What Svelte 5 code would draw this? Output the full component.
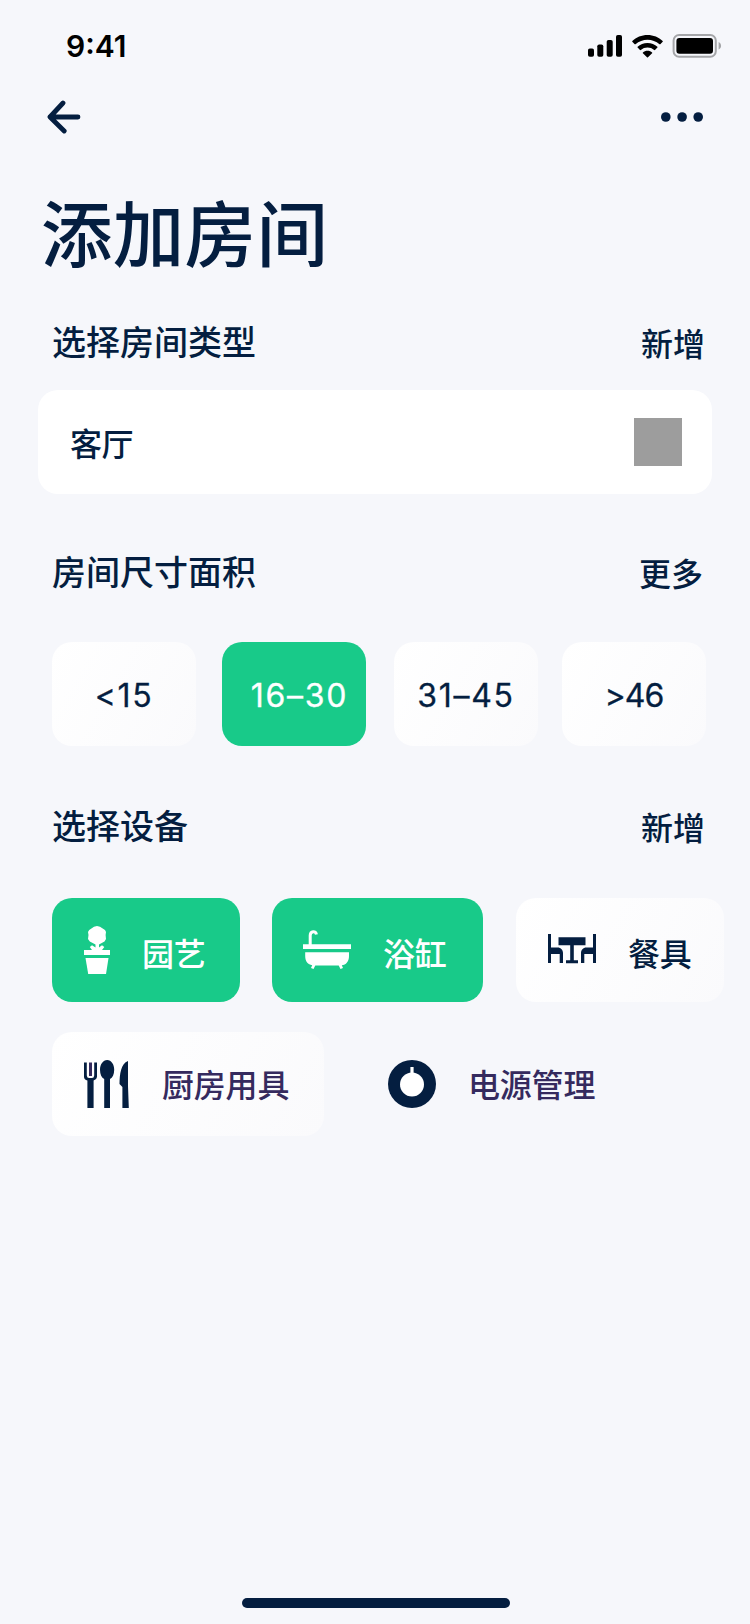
<script lang="ts">
  interface Device {
    id: string;
    label: string;
    selected?: boolean;
    plain?: boolean;
  }

  const sizes = [
    { id: 's', label: '<15' },
    { id: 'm', label: '16–30' },
    { id: 'l', label: '31–45' },
    { id: 'xl', label: '>46' },
  ];

  const deviceRows: Device[][] = [
    [
      { id: 'garden', label: '园艺', selected: true },
      { id: 'bath', label: '浴缸', selected: true },
      { id: 'dining', label: '餐具' },
    ],
    [
      { id: 'kitchen', label: '厨房用具' },
      { id: 'power', label: '电源管理', plain: true },
    ],
  ];

  let selectedSize = $state('m');
  let selectedDevices = $state(deviceRows.flat().filter((d) => d.selected).map((d) => d.id));

  function toggleDevice(id: string) {
    selectedDevices = selectedDevices.includes(id)
      ? selectedDevices.filter((d) => d !== id)
      : [...selectedDevices, id];
  }
</script>

{#snippet deviceIcon(id: string)}
  {#if id === 'garden'}
    <svg width="26" height="48" viewBox="0 0 26 48" fill="currentColor" aria-hidden="true">
      <path d="M13 0 L16 .8 L21 4 L22 6 L21.6 9 L22 13 L20.5 15.5 L15 18.6 V21.5 L18 19.3 L20.3 21 L18 24 H26 V29 H0 V24 H8 L5.8 21 L8 19.3 L11.5 21.5 V18.6 L5.8 15.5 L4 13 L4.5 9 L4 6 L5.2 4 L10 .8 Z" />
      <path d="M1.5 32 H24.5 L22 48 H4.2 Z" />
    </svg>
  {:else if id === 'bath'}
    <svg width="48" height="48" viewBox="0 0 48 48" fill="currentColor" aria-hidden="true">
      <path d="M7.2 19 V9.5 C7.2 4.7 13 4.4 13.4 8.5" fill="none" stroke="currentColor" stroke-width="3" />
      <path d="M0 18.2 H48 V23 H0 Z M2.2 26.2 H46 V30 C46 35.5 43 39 38.8 39.2 L40 42 L37.5 43 L35.7 39.5 H12.3 L10.5 43 L8 42 L9.2 39.2 C5 38.5 2.2 35.5 2.2 30 Z" />
    </svg>
  {:else if id === 'dining'}
    <svg width="48" height="48" viewBox="0 0 48 48" fill="currentColor" aria-hidden="true">
      <path d="M0 8 H3 V21.5 H9.5 C13 21.5 15 24 15 27 V37 H11.7 V28 H3 V37 H0 Z" />
      <path d="M48 8 H45 V21.5 H38.5 C35 21.5 33 24 33 27 V37 H36.3 V28 H45 V37 H48 Z" />
      <path d="M10.5 11.2 H37.5 V19.2 H25.8 V34.2 H30 V37.2 H18 V34.2 H22.2 V19.2 H10.5 Z" />
    </svg>
  {:else if id === 'kitchen'}
    <svg width="45" height="48" viewBox="0 0 45 48" fill="currentColor" aria-hidden="true">
      <path d="M0 2.5 H2.8 V15.5 Q3 18 5 18 H8 Q10 18 10.2 15.5 V2.5 H13 V17 Q12.8 19.5 9.6 20.5 V48 H3.4 V20.5 Q.2 19.5 0 17 Z" />
      <path class="tine" d="M5 2.5 H8 V16 H5 Z" />
      <path d="M23.2 0 C27.3 0 30.2 4.5 30.2 9.8 C30.2 14.5 28.5 17.7 26 19 V48 H20.2 V19 C17.7 17.7 16 14.5 16 9.8 C16 4.5 19 0 23.2 0 Z" />
      <path d="M44 1 V26 L44.8 48 H38.4 V27 L35.5 24 C35.5 14 37 3.5 44 1 Z" />
    </svg>
  {:else}
    <svg width="48" height="48" viewBox="0 0 48 48" aria-hidden="true">
      <circle cx="24" cy="24" r="24" fill="currentColor" />
      <circle cx="24" cy="24.6" r="12" fill="#fff" />
      <path d="M22.4 7 H25.6 V14 H22.4 Z" fill="#fff" />
    </svg>
  {/if}
{/snippet}

<div class="screen">
  <div class="status-bar">
    <span class="time">9:41</span>
    <svg class="signal" width="34" height="22" viewBox="0 0 34 22" aria-hidden="true">
      <rect x="0" y="13.5" width="6" height="8.3" rx="1.8" />
      <rect x="9.3" y="9.5" width="6" height="12.3" rx="1.8" />
      <rect x="18.7" y="5" width="6" height="16.8" rx="1.8" />
      <rect x="28" y="0" width="6" height="21.8" rx="1.8" />
    </svg>
    <svg class="wifi" width="31" height="23" viewBox="0 0 31 23" aria-hidden="true">
      <path d="M15.5 0 C21.4 0 26.8 2.3 30.7 6 Q31 6.4 30.7 6.8 L28.3 9.2 Q27.9 9.5 27.5 9.2 C20.8 3.2 10.2 3.2 3.5 9.2 Q3.1 9.5 2.7 9.2 L.3 6.8 Q0 6.4 .3 6 C4.2 2.3 9.6 0 15.5 0 Z" />
      <path d="M15.5 8 C19.3 8 22.8 9.4 25.4 11.8 Q25.8 12.2 25.4 12.6 L23 15 Q22.6 15.3 22.2 15 C18.4 11.7 12.6 11.7 8.8 15 Q8.4 15.3 8 15 L5.6 12.6 Q5.2 12.2 5.6 11.8 C8.2 9.4 11.7 8 15.5 8 Z" />
      <path d="M15.5 15.8 C17.3 15.8 18.9 16.4 20.1 17.4 Q20.5 17.8 20.1 18.3 L16 22.3 Q15.5 22.8 15 22.3 L10.9 18.3 Q10.5 17.8 10.9 17.4 C12.1 16.4 13.7 15.8 15.5 15.8 Z" />
    </svg>
    <svg class="battery" width="50" height="24" viewBox="0 0 50 24" aria-hidden="true">
      <rect x="1.6" y="1" width="42.2" height="21.7" rx="5.5" fill="none" stroke="#a5a6a9" stroke-width="2" />
      <rect x="4.4" y="4" width="36.6" height="15.7" rx="3" />
      <path d="M46.6 8 C49.9 9.5 49.9 14 46.6 15.6 Z" fill="#a5a6a9" />
    </svg>
  </div>

  <nav class="nav">
    <button aria-label="返回">
      <svg width="34" height="34" viewBox="0 0 34 34" fill="none" stroke="currentColor" stroke-width="4.8" stroke-linecap="round" stroke-linejoin="round">
        <path d="M31 17 H3 M16 3 L3 17 L17.2 31" />
      </svg>
    </button>
    <button aria-label="菜单">
      <svg width="42" height="10" viewBox="0 0 42 10" fill="currentColor">
        <circle cx="4.8" cy="5" r="4.8" />
        <circle cx="21.1" cy="5" r="4.8" />
        <circle cx="37.2" cy="5" r="4.8" />
      </svg>
    </button>
  </nav>

  <h1>添加房间</h1>

  <section class="room-type">
    <header>
      <h2>选择房间类型</h2>
      <button class="link">新增</button>
    </header>
    <div class="select">
      <span>客厅</span>
      <i class="swatch"></i>
    </div>
  </section>

  <section class="room-size">
    <header>
      <h2>房间尺寸面积</h2>
      <button class="link">更多</button>
    </header>
    <div class="sizes">
      {#each sizes as size (size.id)}
        <button
          class="tile size-{size.id}"
          class:active={selectedSize === size.id}
          onclick={() => (selectedSize = size.id)}
        >{size.label}</button>
      {/each}
    </div>
  </section>

  <section class="devices">
    <header>
      <h2>选择设备</h2>
      <button class="link">新增</button>
    </header>
    {#each deviceRows as row}
      <div class="device-row">
        {#each row as device (device.id)}
          <button
            class="tile device {device.id}"
            class:plain={device.plain}
            class:active={selectedDevices.includes(device.id)}
            onclick={() => toggleDevice(device.id)}
          >
            {@render deviceIcon(device.id)}
            <span>{device.label}</span>
          </button>
        {/each}
      </div>
    {/each}
  </section>

  <div class="home-indicator"></div>
</div>

<style>
  :global(body) { background: #f6f7fb; }

  .screen {
    width: 750px; height: 1624px; box-sizing: border-box;
    display: flex; flex-direction: column; overflow: hidden;
    background: #f6f7fb; color: #041e40;
    font-family: Inter, "Noto Sans CJK SC", sans-serif;
    font-size: 32px; font-weight: 500;
  }

  button {
    display: flex; align-items: center; padding: 0; border: none;
    background: none; color: inherit; font: inherit; cursor: pointer;
  }
  svg { display: block; flex-shrink: 0; }

  .status-bar {
    height: 90px; flex-shrink: 0; box-sizing: border-box;
    display: flex; align-items: center; padding: 2px 28px 0 66px; color: #000;
  }
  .time { margin-right: auto; font-size: 30px; font-weight: 600; line-height: 36px; }
  .wifi { margin: 0 9px 0 10px; }

  .nav {
    height: 54px; flex-shrink: 0;
    display: flex; align-items: center; justify-content: space-between;
    padding: 0 47px;
  }

  h1 {
    margin: 41px 0 0; padding-left: 41px;
    font-size: 71.5px; font-weight: 500; line-height: 100px; letter-spacing: 0.3px;
  }

  section { flex-shrink: 0; }
  .room-type { margin-top: 34px; }
  .room-size { margin-top: 55px; }
  .devices { margin-top: 57px; }

  header {
    height: 48px; padding: 0 45px 0 52px;
    display: flex; align-items: center; justify-content: space-between;
  }
  .room-size header { padding-right: 47px; }
  h2 { margin: 0; font-size: 34px; font-weight: 500; line-height: 48px; }
  .link { padding-top: 3px; line-height: 48px; }

  .select {
    height: 104px; margin: 23px 38px 0; padding: 0 30px 0 32px; box-sizing: border-box;
    display: flex; align-items: center; justify-content: space-between;
    background: #fff; border-radius: 20px;
  }
  .select span { letter-spacing: -0.5px; }
  .swatch { width: 48px; height: 48px; background: #9d9d9d; }

  .tile {
    height: 104px; box-sizing: border-box; border-radius: 20px;
    background: linear-gradient(120deg, #fff, #fafafc);
  }
  .tile.active { background: #18ca89; color: #fff; }
  .tile.plain { background: none; }

  .sizes { display: flex; padding-left: 52px; margin-top: 45px; }
  .sizes .tile {
    width: 144px; padding-top: 2px; justify-content: center;
    font-weight: 400; letter-spacing: 1.7px;
    -webkit-text-stroke: 0.3px currentColor;
  }
  .sizes .size-m { margin: 0 28px 0 26px; padding-left: 11px; }
  .sizes .size-l { margin-right: 24px; }
  .sizes .size-xl { letter-spacing: -0.9px; }

  .device-row { display: flex; padding-left: 52px; margin-top: 30px; }
  header + .device-row { margin-top: 47px; }
  .device span { line-height: 48px; padding-top: 10px; letter-spacing: -0.2px; }
  .garden { width: 188px; padding-left: 32px; gap: 32px; }
  .bath { width: 211px; margin: 0 33px 0 32px; padding-left: 31px; gap: 32px; }
  .dining { width: 208px; padding-left: 32px; gap: 32px; }
  .kitchen { width: 272px; padding-left: 32px; gap: 33px; }
  .power { margin-left: 64px; gap: 32px; }
  .kitchen span { padding-top: 4px; color: #352a5e; }
  .power span { padding-top: 3px; color: #352a5e; }
  .tine { fill: #352a5e; }

  .home-indicator {
    width: 268px; height: 10px; flex-shrink: 0;
    margin: auto 0 16px 242px; border-radius: 5px; background: #041e40;
  }
</style>
